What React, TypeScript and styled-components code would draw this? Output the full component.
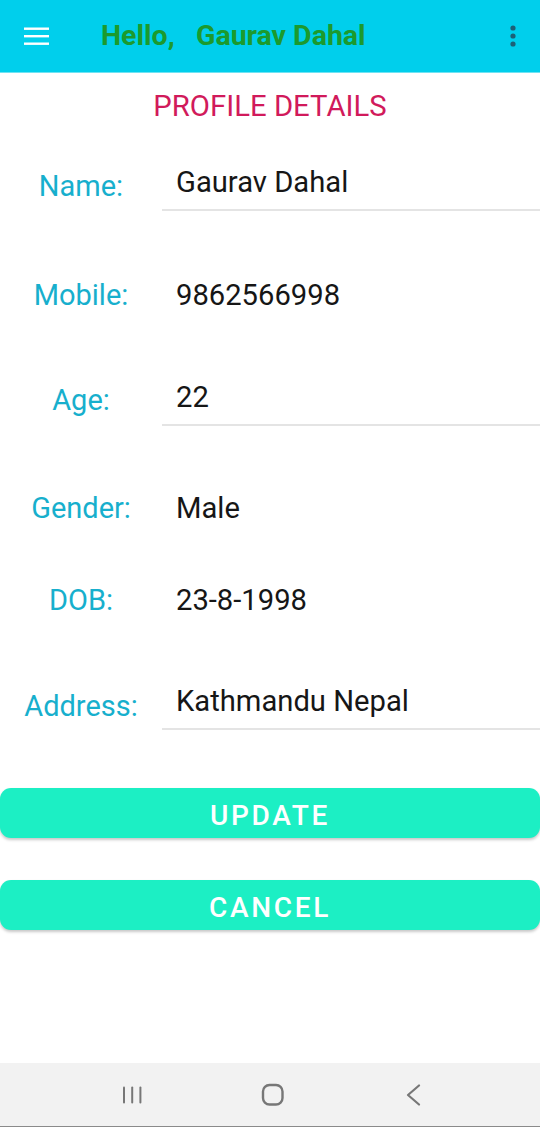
import React from "react";
import styled, { createGlobalStyle } from "styled-components";

const GlobalStyle = createGlobalStyle`
  html, body { margin: 0; padding: 0; background: #ffffff; }
  body { font-family: Roboto, "Noto Sans", Arial, sans-serif; }
  * { box-sizing: border-box; }
`;

const Screen = styled.div`
  display: flex;
  flex-direction: column;
  min-height: 1127px;
  width: 540px;
  background: #ffffff;
`;

const AppBar = styled.header`
  height: 72px;
  background: #00cfec;
  display: flex;
  align-items: center;
  padding: 0 22px 0 24px;
  box-shadow: 0 1px 0 #6fe3f3;
`;

const IconBox = styled.div<{ $w: number }>`
  width: ${(p) => p.$w}px;
  height: 24px;
  display: flex;
  align-items: center;
  justify-content: center;
  flex-shrink: 0;
`;

const AppTitle = styled.h1`
  margin: 0 0 0 52px;
  flex: 1;
  font-size: 28.5px;
  line-height: 32px;
  font-weight: 700;
  color: #1c9a2d;
  white-space: pre;
`;

const Main = styled.main`
  flex: 1;
  display: flex;
  flex-direction: column;
`;

const SectionTitle = styled.h2`
  margin: 18px 0 0;
  text-align: center;
  font-size: 29.3px;
  line-height: 32px;
  font-weight: 400;
  color: #d11a5b;
`;

const Row = styled.div<{ $top: number }>`
  display: grid;
  grid-template-columns: 162px 1fr;
  align-items: start;
  margin-top: ${(p) => p.$top}px;
`;

const Label = styled.div<{ $drop: number }>`
  text-align: center;
  padding-top: ${(p) => p.$drop}px;
  font-size: 29px;
  line-height: 32px;
  color: #17afcd;
`;

const Value = styled.div<{ $field?: boolean }>`
  padding: 0 0 ${(p) => (p.$field ? "11px" : "0")} 14px;
  border-bottom: ${(p) => (p.$field ? "2px solid #e4e4e4" : "none")};
  font-size: 29.2px;
  line-height: 32px;
  color: #161616;
`;

const Actions = styled.div`
  display: flex;
  flex-direction: column;
  gap: 42px;
  margin-top: 58px;
`;

const ActionButton = styled.button`
  height: 50px;
  width: 100%;
  border: none;
  border-radius: 11px;
  background: #1cefc4;
  color: #ffffff;
  font-family: Roboto, "Noto Sans", Arial, sans-serif;
  font-size: 28px;
  font-weight: 500;
  letter-spacing: 2.7px;
  box-shadow: 0 2px 3px rgba(0, 0, 0, 0.22);
  padding: 4px 0 0;
`;

const NavBar = styled.nav`
  height: 64px;
  background: #f2f2f2;
  border-bottom: 1px solid #8a8a8a;
  display: flex;
  align-items: center;
  justify-content: center;
  gap: 101px;
  padding: 0 0 0 5px;
`;

const NavItem = styled.div`
  width: 40px;
  height: 24px;
  display: flex;
  align-items: center;
  justify-content: center;
`;

const rows = [
  { label: "Name:", value: "Gaurav Dahal", field: true, top: 44, drop: 4 },
  { label: "Mobile:", value: "9862566998", field: false, top: 68, drop: 0 },
  { label: "Age:", value: "22", field: true, top: 70, drop: 3 },
  { label: "Gender:", value: "Male", field: false, top: 66, drop: 0 },
  { label: "DOB:", value: "23-8-1998", field: false, top: 60, drop: 0 },
  { label: "Address:", value: "Kathmandu Nepal", field: true, top: 69, drop: 5 },
];

export default function App() {
  return (
    <>
      <GlobalStyle />
      <Screen>
        <AppBar>
          <IconBox $w={25}>
            <svg width="25" height="24" viewBox="0 0 25 24">
              <rect x="0" y="3.5" width="25" height="2.4" fill="#ffffff" />
              <rect x="0" y="11" width="25" height="2.4" fill="#ffffff" />
              <rect x="0" y="18.5" width="25" height="2.4" fill="#ffffff" />
            </svg>
          </IconBox>
          <AppTitle>{"Hello,   Gaurav Dahal"}</AppTitle>
          <IconBox $w={10}>
            <svg width="10" height="24" viewBox="0 0 10 24">
              <circle cx="5" cy="4" r="2.6" fill="#1d6076" />
              <circle cx="5" cy="12" r="2.6" fill="#1d6076" />
              <circle cx="5" cy="20" r="2.6" fill="#1d6076" />
            </svg>
          </IconBox>
        </AppBar>
        <Main>
          <SectionTitle>PROFILE DETAILS</SectionTitle>
          {rows.map((r) => (
            <Row key={r.label} $top={r.top}>
              <Label $drop={r.drop}>{r.label}</Label>
              <Value $field={r.field}>{r.value}</Value>
            </Row>
          ))}
          <Actions>
            <ActionButton>UPDATE</ActionButton>
            <ActionButton>CANCEL</ActionButton>
          </Actions>
        </Main>
        <NavBar>
          <NavItem>
            <svg width="20" height="20" viewBox="0 0 20 20">
              <rect x="1" y="1.5" width="2" height="17" rx="1" fill="#777" />
              <rect x="9.2" y="1.5" width="2" height="17" rx="1" fill="#777" />
              <rect x="17.4" y="1.5" width="2" height="17" rx="1" fill="#777" />
            </svg>
          </NavItem>
          <NavItem>
            <svg width="24" height="24" viewBox="0 0 24 24">
              <rect x="2" y="2" width="19.5" height="19.5" rx="6.5" fill="none" stroke="#777" strokeWidth="2.4" />
            </svg>
          </NavItem>
          <NavItem>
            <svg width="16" height="22" viewBox="0 0 16 22">
              <polyline points="13,1.5 2,11 13,20.5" fill="none" stroke="#777" strokeWidth="2.2" strokeLinecap="round" strokeLinejoin="round" />
            </svg>
          </NavItem>
        </NavBar>
      </Screen>
    </>
  );
}
